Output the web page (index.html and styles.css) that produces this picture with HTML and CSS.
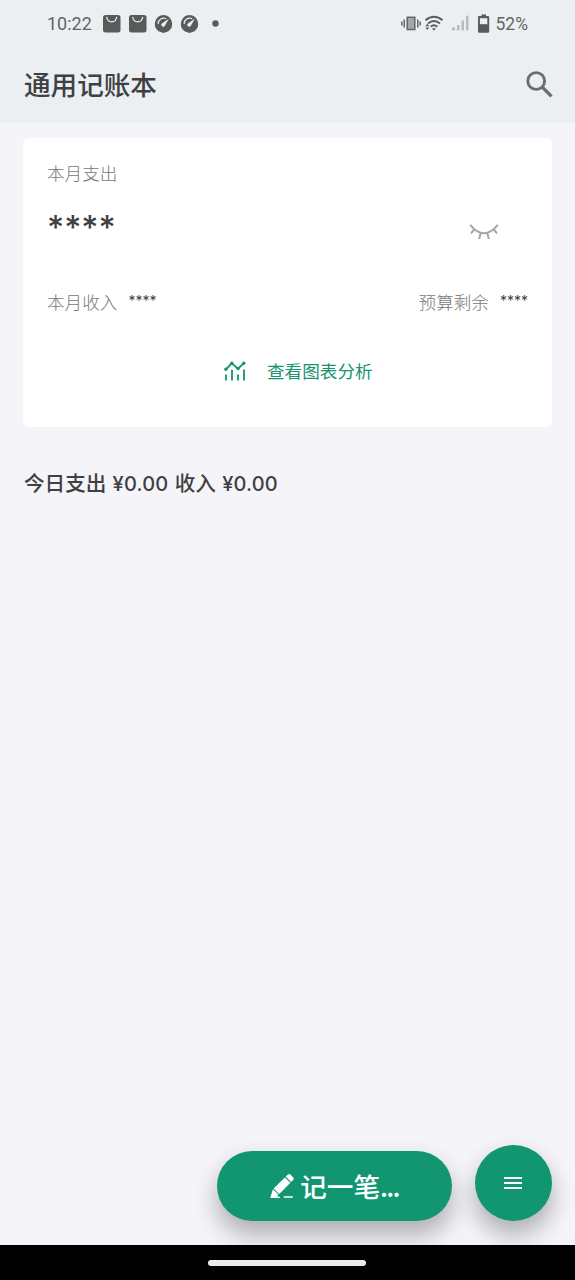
FILE: index.html
```html
<!DOCTYPE html>
<html lang="zh-CN">
<head>
<meta charset="utf-8">
<title>通用记账本</title>
<link rel="stylesheet" href="styles.css">
</head>
<body>
<div class="app">
  <header class="header">
    <div class="status">
      <span class="clock">10:22</span>
      <svg class="notices" width="118" height="20" viewBox="0 0 118 20">
        <g fill="#585b5a">
          <rect x="0" y="1" width="17.5" height="17.5" rx="2.5"/>
          <rect x="26" y="1" width="17.5" height="17.5" rx="2.5"/>
          <path d="M60.5 1a9 9 0 0 1 5 16.2l-5 1.800-5-1.800A9 9 0 0 1 60.500 1z"/>
          <path d="M86.500 1a9 9 0 0 1 5 16.200l-5 1.800-5-1.800A9 9 0 0 1 86.500 1z"/>
          <circle cx="112.500" cy="9.500" r="3.200"/>
        </g>
        <g fill="none" stroke="#ebeef1" stroke-width="1.300" stroke-linecap="round">
          <path d="M3.800 3.300c.6 6 9.200 6 9.800 0M29.800 3.300c.6 6 9.200 6 9.800 0"/>
          <path d="M55.200 9.500c.2-4 4-6.300 7.500-5M81.200 9.500c.2-4 4-6.300 7.500-5"/>
        </g>
        <path d="M65.800 4.800l-3.800 6.800a1.900 1.900 0 1 1-2.800-2.400zM91.800 4.800l-3.800 6.800a1.900 1.900 0 1 1-2.800-2.400z" fill="#ebeef1"/>
      </svg>
      <svg class="signals" width="90" height="20" viewBox="0 0 90 20">
        <g fill="none" stroke="#626564" stroke-width="1.500">
          <rect x="6.200" y="3.300" width="7.600" height="12.200" fill="#a4a7a7"/>
          <path d="M.8 7.500v4M3.200 5.500v8M16.800 5.500v8M19.200 7.500v4"/>
        </g>
        <g fill="none" stroke="#585b5a" stroke-width="1.900">
          <path d="M24.500 6.200q8.500-7 17 0M27 9.500q6-5 12 0M29.700 12.700q3.300-2.700 6.600 0"/>
        </g>
        <g fill="#585b5a">
          <path d="M31 14.300h4l-2 2.400zM24.300 12.300l2-2.600 2 2.600zM24.300 13.500l2 2.600 2-2.600z"/>
          <path d="M80.500.5h4.500V2h2a1.200 1.200 0 0 1 1.200 1.200v14.300a1.300 1.300 0 0 1-1.300 1.300h-8.600a1.300 1.300 0 0 1-1.300-1.300V3.200A1.200 1.200 0 0 1 78.200 2h2.300z"/>
        </g>
        <path d="M78.900 4.200h7.400v6h-7.400z" fill="#ebeef1"/>
        <g fill="#b9bcbd"><rect x="51" y="13.300" width="3" height="3"/><rect x="56" y="11" width="2.500" height="5.300"/><rect x="60.500" y="6.500" width="2.500" height="9.800"/><rect x="65" y="1.700" width="2.500" height="14.600"/></g>
      </svg>
      <span class="battery">52%</span>
    </div>
    <div class="titlebar">
      <h1 class="title">通用记账本</h1>
      <svg class="search" width="27" height="27" viewBox="0 0 27 27" fill="none" stroke="#6b6e6f">
        <circle cx="10.200" cy="10" r="8.400" stroke-width="2.900"/>
        <path d="M16.200 16l9.300 9.300" stroke-width="3.300"/>
      </svg>
    </div>
  </header>

  <main class="main">
    <section class="card">
      <div class="label">本月支出</div>
      <div class="row amount-row">
        <span class="amount">****</span>
        <svg class="eye" width="30" height="20" viewBox="0 0 30 20" fill="none" stroke="#a6a6a6" stroke-width="2">
          <path d="M1.200 3.800q13.800 17 27.600 0M5.700 8l-3.800 4.300M24.300 8l3.800 4.300M11.800 11.600l-1.600 6.400M18.200 11.600l1.600 6.400"/>
        </svg>
      </div>
      <div class="row stats">
        <div class="stat"><span class="label">本月收入</span><span class="masked">****</span></div>
        <div class="stat"><span class="label">预算剩余</span><span class="masked">****</span></div>
      </div>
      <a class="chart-link">
        <svg width="22" height="20" viewBox="0 0 22 20" fill="none" stroke="#17936d" stroke-width="1.800">
          <path d="M1.700 8.600L7.700 2.300l6.400 5.400L20 1.900"/>
          <path d="M2 13.500V19.500M8 8.800V19.500M14 13.500V19.500M20 8.500V19.500"/>
          <g fill="#17936d" stroke="none"><circle cx="1.900" cy="8.300" r="1.700"/><circle cx="7.800" cy="2.300" r="1.700"/><circle cx="14" cy="7.600" r="1.700"/><circle cx="19.800" cy="2.200" r="1.700"/></g>
        </svg>
        <span>查看图表分析</span>
      </a>
    </section>
    <h2 class="today">今日支出 <span class="money">¥0.00</span> 收入 <span class="money">¥0.00</span></h2>
  </main>

  <div class="actions">
    <button class="add">
      <svg width="25" height="25" viewBox="0 0 25 25" fill="#fff">
        <path d="M15.700 2.600L17.600.8a2.200 2.200 0 0 1 3 0l2.400 2.400a2 2 0 0 1 0 2.900l-1.900 1.800z"/>
        <path d="M14.900 3.400l5.500 5.300L9.300 19.900 3.600 14.400z"/>
        <path d="M2.900 15.200l5.600 5.400-1.500 1.300 3 1v1H.2z"/>
        <rect x="13.500" y="22.300" width="9.500" height="1.400" rx=".6"/>
      </svg>
      <span>记一笔<span class="dots">...</span></span>
    </button>
    <button class="menu" aria-label="菜单">
      <svg width="18" height="14" viewBox="0 0 18 14" stroke="#fff" stroke-width="1.900"><path d="M0 2h18M0 7h18M0 12h18"/></svg>
    </button>
  </div>
  <footer class="navbar"><div class="handle"></div></footer>
</div>
</body>
</html>
```
FILE: styles.css
```css
* { box-sizing: border-box; }
body {
  margin: 0;
  background: #f4f4f9;
  font-family: "Noto Sans CJK SC", sans-serif;
  color: #3f4041;
}
.app { display: flex; flex-direction: column; width: 575px; height: 1280px; overflow: hidden; }
.header { flex: none; height: 123px; background: #ebeff2; }
.status {
  display: flex;
  align-items: center;
  height: 47px;
  padding: 0 47px;
  font: 18px/20px Roboto, sans-serif;
  color: #626564;
}
.clock { width: 56px; padding-top: 1px; }
.notices { flex: none; }
.signals { flex: none; margin-left: 180px; }
.battery { margin-left: 5px; padding-top: 1px; font-size: 17.500px; }
.titlebar { display: flex; align-items: center; justify-content: space-between; height: 75px; padding: 0 22px 0 24px; }
.title { margin: 0; padding-bottom: 2px; font-size: 26.600px; line-height: 40px; font-weight: 500; }
.main { flex: 1; padding: 15px 23px 0; }
.card { height: 289px; padding: 22px 24px 0; background: #fff; border-radius: 6px; }
.label { font-size: 17.600px; line-height: 26px; font-weight: 300; color: #777; }
.row { display: flex; justify-content: space-between; }
.amount-row { height: 66px; margin-top: 20px; padding-right: 29px; }
.amount { font-family: Inter, sans-serif; font-size: 33px; line-height: 43px; font-weight: 500; }
.eye { margin-top: 15px; }
.stats { margin-top: 17px; }
.stat { display: flex; gap: 11px; }
.masked { font-family: Inter, sans-serif; font-size: 14px; line-height: 24px; }
.chart-link {
  display: flex;
  align-items: center;
  gap: 21px;
  margin: 43px 0 0 177px;
  font-size: 17.600px;
  line-height: 26px;
  color: #17936d;
}
.today { margin: 40px 0 0 1px; font-size: 20.600px; line-height: 30px; font-weight: 500; white-space: nowrap; word-spacing: 1.600px; }
.money { font-family: Inter, sans-serif; font-size: 20px; letter-spacing: .200px; }
.actions { display: flex; flex: none; align-items: flex-end; justify-content: flex-end; gap: 23px; padding: 0 23px 24px; }
.add, .menu {
  display: flex;
  align-items: center;
  justify-content: center;
  padding: 0;
  border: 0;
  background: #129672;
  color: #fff;
  box-shadow: 0 16px 24px rgba(0, 0, 0, .22), 0 6px 24px rgba(0, 0, 0, .09);
}
.add { width: 235px; height: 70px; gap: 5px; border-radius: 35px; font: 500 26.600px/40px "Noto Sans CJK SC", sans-serif; }
.dots { letter-spacing: -1.700px; }
.menu { width: 77px; height: 76px; padding-right: 1px; border-radius: 50%; }
.navbar { display: flex; flex: none; justify-content: center; height: 35px; padding: 15px 1px 0 0; background: #000; position: relative; }
.handle { width: 158px; height: 6px; border-radius: 3px; background: #eaeaea; }
```
